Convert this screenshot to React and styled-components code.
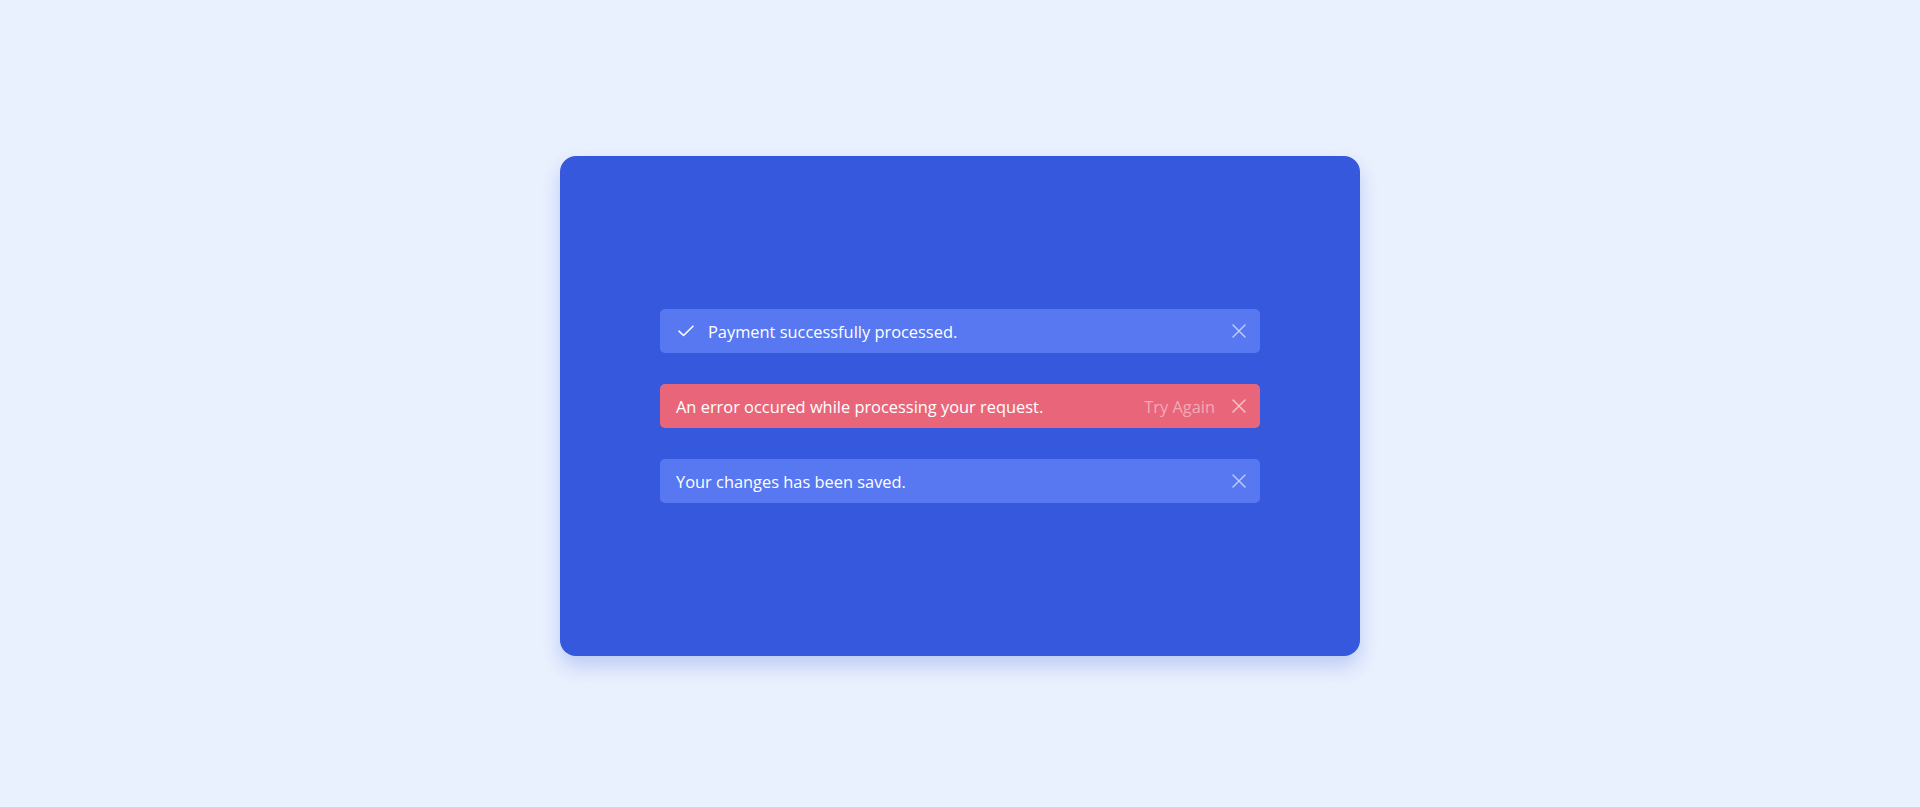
import React from "react";
import styled, { createGlobalStyle } from "styled-components";

const Global = createGlobalStyle`
  html, body { margin: 0; padding: 0; }
  body {
    background: #eaf1fe;
    font-family: "Open Sans", "Noto Sans", sans-serif;
  }
`;

const Page = styled.div`
  height: 807px;
  display: flex;
  align-items: center;
  justify-content: center;
  padding-top: 5px;
  box-sizing: border-box;
`;

const Card = styled.div`
  width: 800px;
  height: 500px;
  background: #3558dd;
  border-radius: 16px;
  box-shadow: 0 10px 20px rgba(53, 88, 221, 0.25);
  display: flex;
  flex-direction: column;
  align-items: center;
  justify-content: center;
  gap: 31px;
`;

const Toast = styled.div`
  width: 600px;
  height: 44px;
  box-sizing: border-box;
  padding: 0 14px 0 16px;
  border-radius: 5px;
  background: ${(p) => (p.$error ? "#e9667a" : "#5778f0")};
  display: flex;
  align-items: center;
  color: #fff;
  font-size: 16.4px;
`;

const IconBox = styled.span`
  width: 20px;
  height: 20px;
  margin-right: 12px;
  display: flex;
  align-items: center;
  justify-content: center;
`;

const Message = styled.span`
  flex: 1;
  white-space: nowrap;
`;

const Action = styled.button`
  background: none;
  border: 0;
  padding: 0;
  margin-right: 17px;
  font: inherit;
  color: rgba(255, 255, 255, 0.45);
  cursor: pointer;
`;

const Close = styled.button`
  background: none;
  border: 0;
  padding: 0;
  width: 14px;
  height: 14px;
  display: flex;
  align-items: center;
  justify-content: center;
  cursor: pointer;
  opacity: 0.6;
`;

const Check = () => (
  <svg width="16" height="12" viewBox="0 0 16 12" fill="none">
    <path d="M1 6.2 L5.5 10.5 L15 1.2" stroke="#fff" strokeWidth="1.6" strokeLinecap="round" strokeLinejoin="round" />
  </svg>
);

const X = () => (
  <svg width="14" height="14" viewBox="0 0 14 14" fill="none">
    <path d="M1 1 L13 13 M13 1 L1 13" stroke="#fff" strokeWidth="1.5" strokeLinecap="round" />
  </svg>
);

export default function App() {
  return (
    <>
      <Global />
      <Page>
        <Card>
          <Toast>
            <IconBox><Check /></IconBox>
            <Message>Payment successfully processed.</Message>
            <Close><X /></Close>
          </Toast>
          <Toast $error>
            <Message>An error occured while processing your request.</Message>
            <Action>Try Again</Action>
            <Close><X /></Close>
          </Toast>
          <Toast>
            <Message>Your changes has been saved.</Message>
            <Close><X /></Close>
          </Toast>
        </Card>
      </Page>
    </>
  );
}
